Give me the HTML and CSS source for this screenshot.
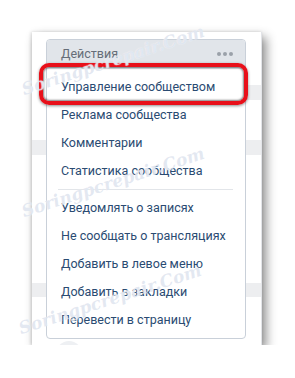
FILE: index.html
```html
<!doctype html>
<html>
	<head>
		<meta charset="utf-8">
		<title>Действия</title>
		<link rel="stylesheet" href="styles.css">
	</head>
	<body>
		<div class="shot">
			<div class="page">
				<div class="avatar"></div>
			</div>

			<div class="menu">
				<div class="menu_header">
					<span>Действия</span>
					<span class="dots"><i></i><i></i><i></i></span>
				</div>
				<div class="menu_list">
					<a class="menu_item">Управление сообществом</a>
					<a class="menu_item">Реклама сообщества</a>
					<a class="menu_item">Комментарии</a>
					<a class="menu_item">Статистика сообщества</a>
					<div class="menu_sep"></div>
					<a class="menu_item">Уведомлять о записях</a>
					<a class="menu_item">Не сообщать о трансляциях</a>
					<a class="menu_item">Добавить в левое меню</a>
					<a class="menu_item">Добавить в закладки</a>
					<a class="menu_item">Перевести в страницу</a>
				</div>
			</div>

			<!-- red marker round the first item -->
			<div class="marker"></div>

			<span class="mark mark1">Soringpcrepair.Com</span>
			<span class="mark mark2">Soringpcrepair.Com</span>
			<span class="mark mark3">Soringpcrepair.Com</span>
		</div>
	</body>
</html>
```

FILE: styles.css
```css
body {
	margin: 0;
	background: #fff;
	font-family: Roboto, "Open Sans", "DejaVu Sans", sans-serif;
}
.shot {
	position: relative;
	width: 230px;
	height: 313px;
	margin: 32px 0 0 32px;
	box-shadow: 4px 5px 10px rgba(0, 0, 0, 0.45), -1px 0 3px rgba(0, 0, 0, 0.15);
}
.page {
	height: 100%;
	overflow: hidden;
	background:
		linear-gradient(#e2e4e8, #e2e4e8) right 0 top 0 / 1px 100% no-repeat,
		linear-gradient(#edeef0, #edeef0) right 0 top 53px / 16px 15px no-repeat,
		linear-gradient(#edeef0, #edeef0) 0 108px / 100% 15px no-repeat,
		linear-gradient(#edeef0, #edeef0) 0 251px / 100% 14px no-repeat,
		#fff;
}
.avatar {
	width: 26px;
	height: 26px;
	margin: 309px 0 0 24px;
	border-radius: 50%;
	background: #eef0f3;
}
.menu {
	position: absolute;
	left: 14px;
	top: 7px;
	width: 198px;
	background: #fff;
	border: 1px solid #c9d0d9;
	border-radius: 4px;
	overflow: hidden;
}
.menu_header {
	display: flex;
	justify-content: space-between;
	align-items: center;
	height: 29px;
	padding: 0 12px 2px 14px;
	box-sizing: border-box;
	background: #e1e5ea;
	color: #656d78;
	font-size: 12.5px;
}
.dots {
	display: flex;
	gap: 2px;
}
.dots i {
	width: 4px;
	height: 4px;
	border-radius: 50%;
	background: #9aa1a9;
}
.menu_list {
	padding: 4px 0;
}
.menu_item {
	display: block;
	height: 28px;
	line-height: 28px;
	padding: 0 14px;
	font-size: 12.5px;
	color: #2a4b72;
	white-space: nowrap;
}
.menu_sep {
	height: 1px;
	margin: 4px 12px 4px 11px;
	background: #e2e5e9;
}
.marker {
	position: absolute;
	left: 7px;
	top: 31px;
	width: 209px;
	height: 42px;
	box-sizing: border-box;
	border: 4px solid #e8101a;
	border-radius: 10px;
	box-shadow: inset 0 0 2px 1px rgba(0, 0, 0, 0.5), 0 1px 3px rgba(0, 0, 0, 0.45);
}
.mark {
	position: absolute;
	width: 200px;
	margin-left: -100px;
	text-align: center;
	font-family: "DejaVu Serif", serif;
	font-style: italic;
	font-weight: bold;
	font-size: 17px;
	color: rgba(175, 190, 215, 0.35);
	text-shadow: 0 0 1px #fff;
	transform: rotate(-18deg);
	pointer-events: none;
}
.mark1 {
	left: 81px;
	top: 18px;
}
.mark2 {
	left: 81px;
	top: 140px;
}
.mark3 {
	left: 78px;
	top: 257px;
}
```
